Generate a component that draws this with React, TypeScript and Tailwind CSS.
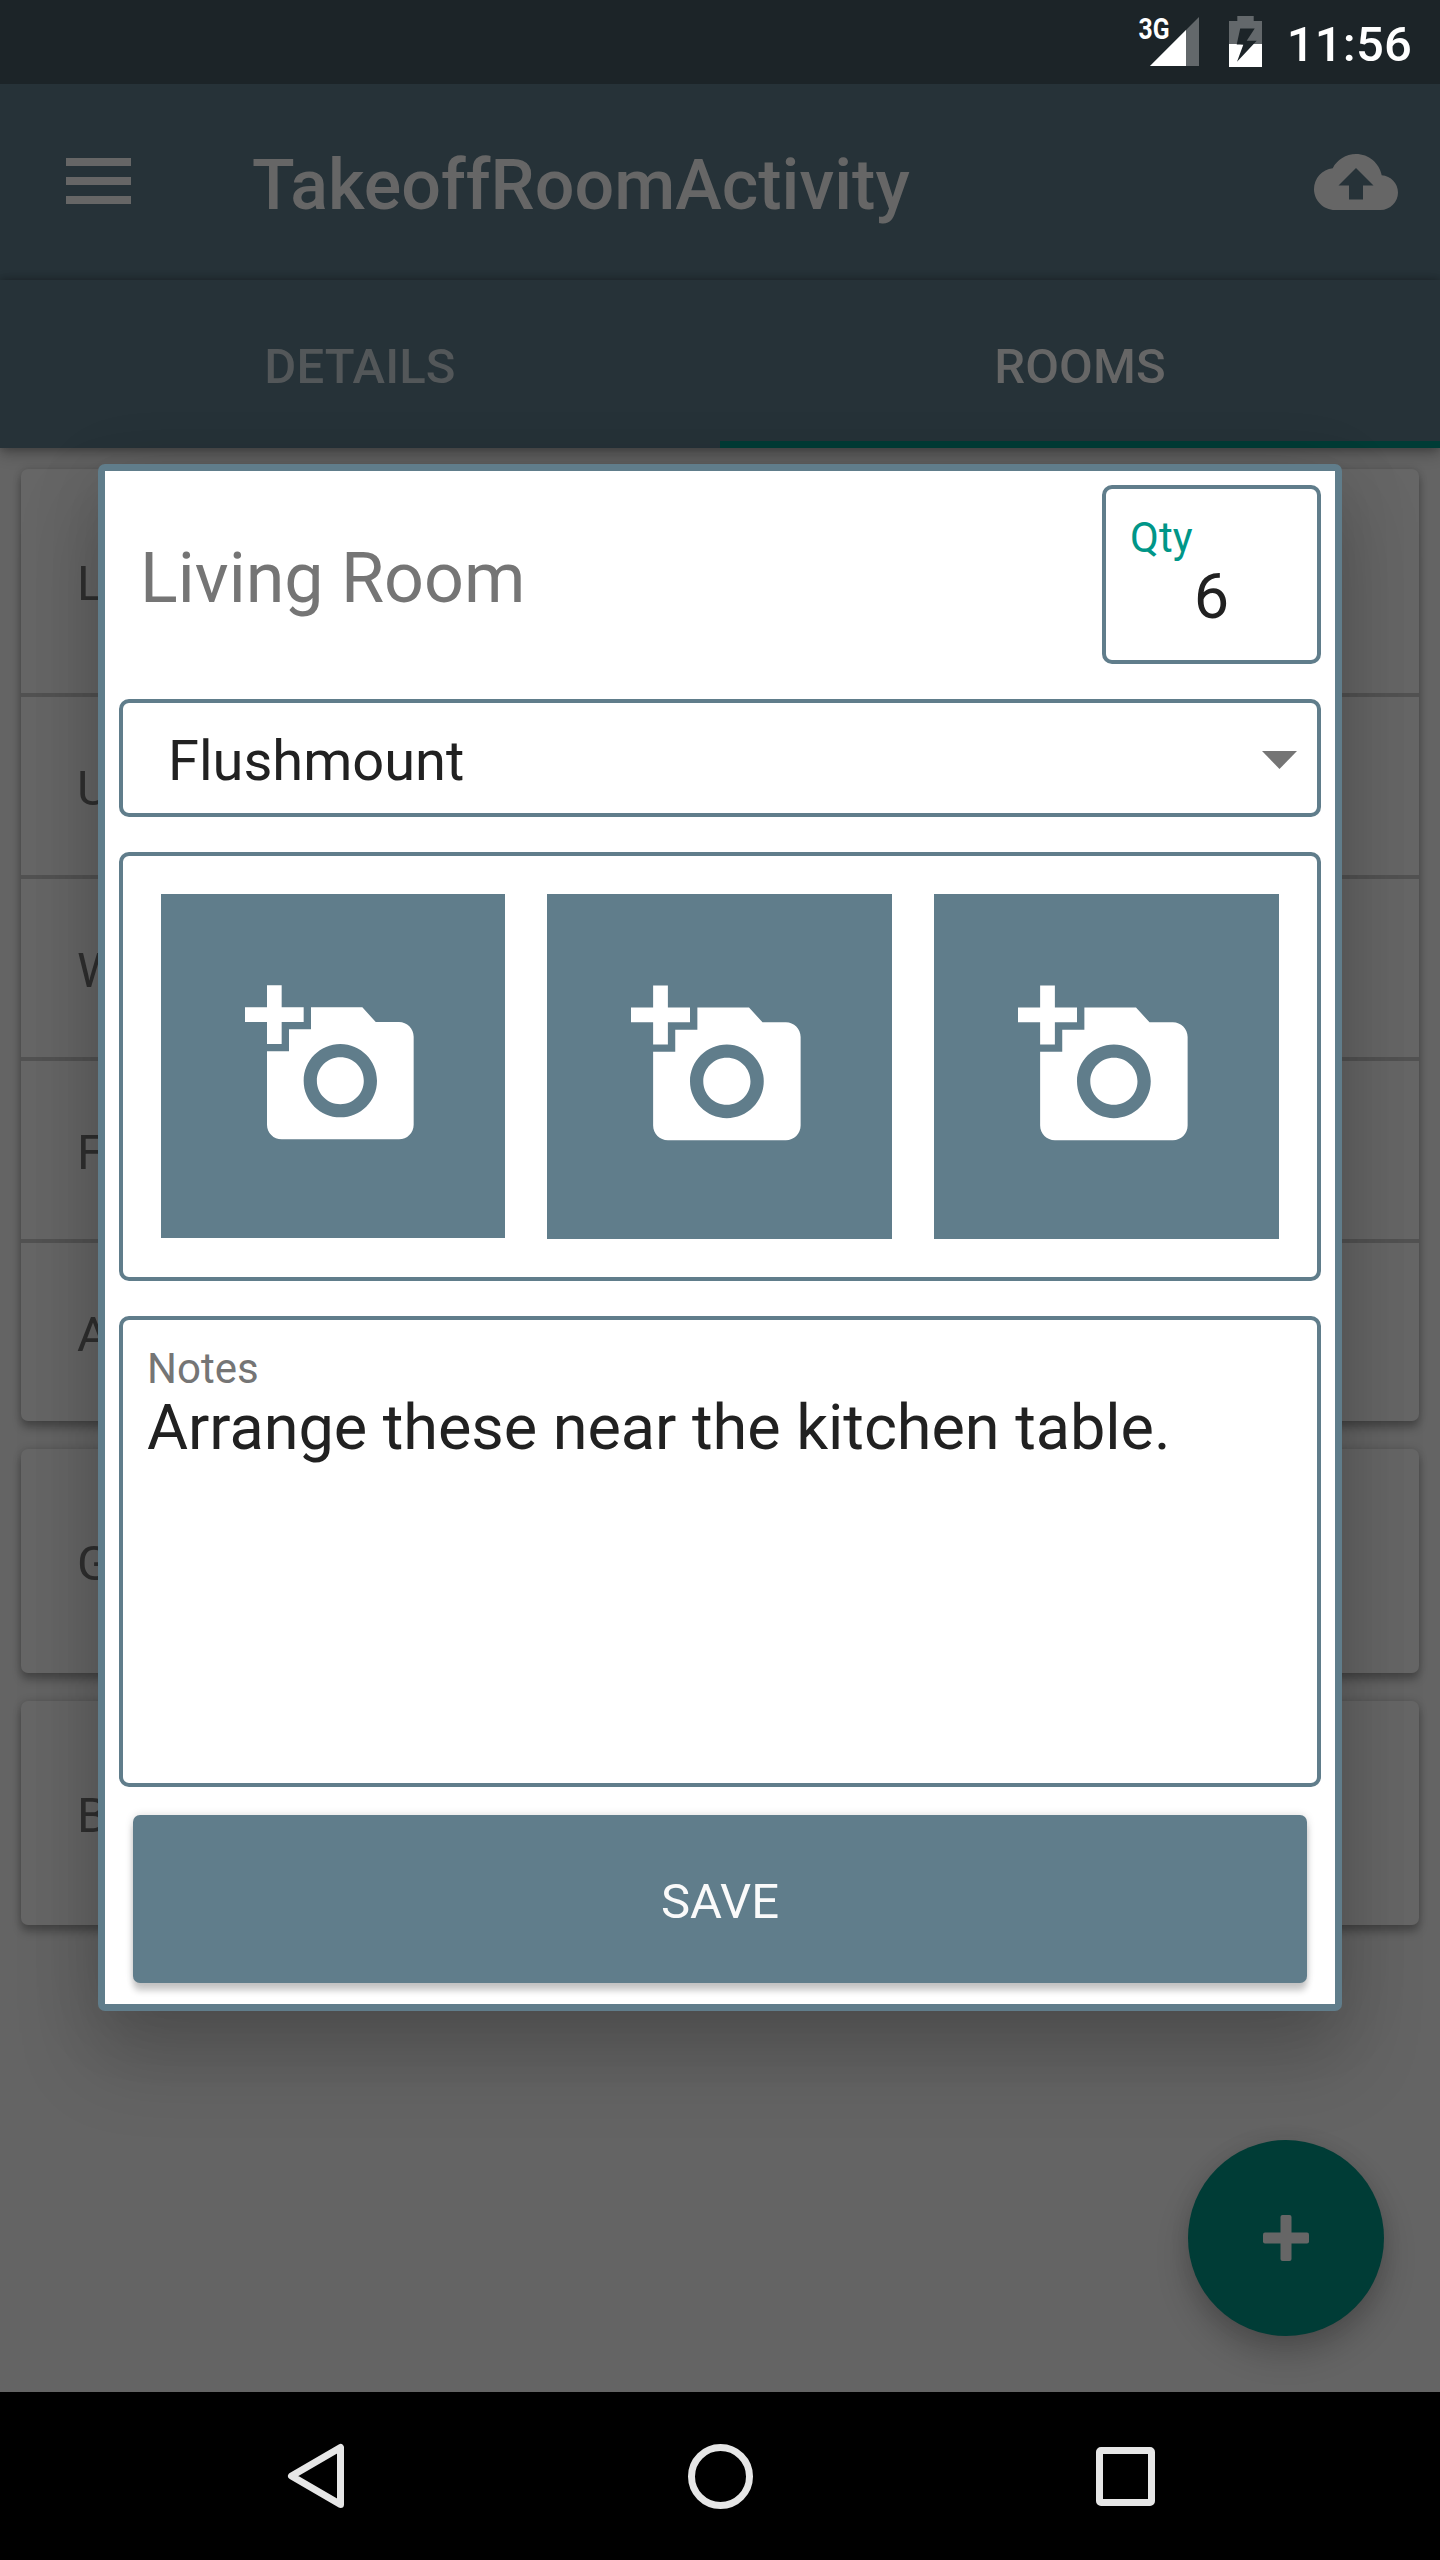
import React from "react";
import { MdAddAPhoto } from "react-icons/md";

function StatusBar() {
  return (
    <header className="flex h-[84px] items-start justify-end bg-[#1c2428] pr-[28px]">
      <svg className="h-[68px] w-[71px]" viewBox="1130 0 71 68">
        <path d="M1150 66L1199 17V66Z" fill="#63686b" />
        <path d="M1150 66L1186 30V66Z" fill="#fff" />
        <text
          x="1138.500"
          y="39"
          fill="#fff"
          fontFamily="Roboto, sans-serif"
          fontSize="30"
          fontWeight="700"
          textLength="31"
          lengthAdjust="spacingAndGlyphs"
        >
          3G
        </text>
      </svg>
      <svg className="mt-[16px] ml-[28px] h-[51px] w-[33px]" viewBox="1229 16 33 51">
        <path d="M1229 21h8.300v-5h16.400v5H1262V44h-33z" fill="#63686b" />
        <path d="M1229 44h33v23h-33z" fill="#fff" />
        <path d="M1240 44.500l-3.300 0 3.500-16h14.500l-8 12.300h10l-19.700 21 6.300-17z" fill="#1c2428" />
      </svg>
      <span className="mt-[20px] ml-[25px] text-[49px] leading-none font-medium tracking-[0.2px] whitespace-nowrap text-white">
        11:56
      </span>
    </header>
  );
}

function Toolbar() {
  return (
    <div className="flex h-[196px] items-center bg-[#263238] pr-[42px] pl-[65.500px]">
      <div className="flex w-[65px] flex-col gap-[11px] pb-[3px]">
        <div className="h-[8px] bg-[#666]" />
        <div className="h-[8px] bg-[#666]" />
        <div className="h-[8px] bg-[#666]" />
      </div>
      <h1 className="ml-[121.500px] flex-1 pt-[6px] text-[70px] leading-none font-medium tracking-[0.040px] text-[#666]">
        TakeoffRoomActivity
      </h1>
      <svg className="size-[84px]" viewBox="0 0 24 24" fill="#666">
        <path d="M19.350 10.040C18.670 6.590 15.640 4 12 4 9.110 4 6.600 5.640 5.350 8.040 2.340 8.360 0 10.910 0 14c0 3.310 2.690 6 6 6h13c2.760 0 5-2.240 5-5 0-2.640-2.050-4.780-4.650-4.960zM14 13v4h-4v-4H7l5-5 5 5h-3z" />
      </svg>
    </div>
  );
}

function Tabs() {
  return (
    <nav className="relative flex h-[168px] bg-[#263238] text-[49px] leading-none font-medium shadow-[0_7px_14px_rgba(0,0,0,0.2),0_0_9px_rgba(0,0,0,0.32)]">
      <div className="flex flex-1 items-center justify-center pt-[4px] tracking-[0.150px] text-[#535759]">DETAILS</div>
      <div className="flex flex-1 items-center justify-center border-b-[7px] border-[#003c36] pt-[11px] tracking-[0.150px] text-[#666]">
        ROOMS
      </div>
    </nav>
  );
}

function RoomCard({ items }: { items: string[] }) {
  return (
    <section className="overflow-hidden rounded-[7px] bg-[#666] shadow-[0_7px_8px_rgba(0,0,0,0.26),0_0_8px_rgba(0,0,0,0.16)]">
      {items.map((item, i) => (
        <div
          key={item}
          className={
            i === 0
              ? "flex h-[224px] items-center pt-[4px] pl-[56px]"
              : "flex h-[182px] items-center border-t-[4px] border-[#525252] pt-[4px] pl-[56px]"
          }
        >
          {item}
        </div>
      ))}
    </section>
  );
}

function Dialog() {
  return (
    <div
      role="dialog"
      className="absolute top-[464px] left-[98px] flex h-[1547px] w-[1244px] flex-col rounded-[7px] bg-[#607d8b] p-[7px] shadow-[0_46px_80px_4px_rgba(0,0,0,0.17),0_10px_70px_rgba(0,0,0,0.12)]"
    >
      <div className="flex flex-1 flex-col bg-white px-[14px] pt-[14px]">
        <div className="flex h-[179px] items-center justify-between">
          <h2 className="pt-[7px] pl-[21px] text-[70px] leading-none text-[#757575]">Living Room</h2>
          <div className="flex h-[179px] w-[219px] flex-col rounded-[10px] border-4 border-[#607d8b] pt-[28px]">
            <span className="pl-[24px] text-[42px] leading-none text-[#009688]">Qty</span>
            <span className="mt-[6px] text-center text-[63px] leading-none text-[#212121]">6</span>
          </div>
        </div>

        <div className="mt-[35px] flex h-[118px] items-center justify-between rounded-[10px] border-4 border-[#607d8b] pr-[20px] pl-[45px]">
          <span className="pt-[5px] text-[56px] leading-none text-[#212121]">Flushmount</span>
          <svg className="mt-[3px] h-[18px] w-[35px]" viewBox="0 0 35 18" fill="#757575">
            <path d="M0 0h35L17.500 18z" />
          </svg>
        </div>

        <div className="mt-[35px] flex h-[429px] justify-between rounded-[10px] border-4 border-[#607d8b] px-[38px] pt-[38px]">
          <div className="flex h-[344px] w-[344px] items-center justify-center bg-[#607d8b] text-white">
            <MdAddAPhoto className="size-[176px]" />
          </div>
          <div className="flex h-[345px] w-[345px] items-center justify-center bg-[#607d8b] text-white">
            <MdAddAPhoto className="size-[177px]" />
          </div>
          <div className="flex h-[345px] w-[345px] items-center justify-center bg-[#607d8b] text-white">
            <MdAddAPhoto className="size-[177px]" />
          </div>
        </div>

        <div className="mt-[35px] flex h-[471px] flex-col rounded-[10px] border-4 border-[#607d8b] pt-[28px] pl-[24px]">
          <span className="text-[42px] leading-none text-[#757575]">Notes</span>
          <p className="mt-[6px] text-[63px] leading-none tracking-[-0.040px] whitespace-nowrap text-[#212121]">
            Arrange these near the kitchen table.
          </p>
        </div>

        <button className="mx-[14px] mt-[28px] h-[168px] rounded-[7px] bg-[#607d8b] pt-[5px] text-[49px] leading-none text-[#fafafa] shadow-[0_8px_6px_rgba(0,0,0,0.19),0_0_8px_rgba(0,0,0,0.14)]">
          SAVE
        </button>
      </div>
    </div>
  );
}

function NavBar() {
  return (
    <footer className="relative flex h-[168px] items-center justify-between bg-black pr-[285px] pl-[287px]">
      <svg className="h-[66px] w-[58px]" viewBox="0 0 58 66" fill="none" stroke="#e6e6e6" strokeWidth="7" strokeLinejoin="round">
        <path d="M53.500 4.500V61.500L4.500 33z" />
      </svg>
      <div className="size-[65px] rounded-full border-[7px] border-[#e6e6e6]" />
      <div className="size-[59px] rounded-[5px] border-[7px] border-[#e6e6e6]" />
    </footer>
  );
}

export default function App() {
  return (
    <div className="relative flex h-[2560px] w-[1440px] flex-col overflow-hidden bg-[#646464] font-[Roboto,sans-serif]">
      <StatusBar />
      <Toolbar />
      <Tabs />
      <main className="flex flex-1 flex-col gap-[28px] px-[21px] pt-[21px] text-[49px] leading-none text-[#2f2f2f]">
        <RoomCard items={["L", "U", "W", "F", "A"]} />
        <RoomCard items={["G"]} />
        <RoomCard items={["B"]} />
      </main>
      <button className="absolute top-[2140px] left-[1188px] flex size-[196px] items-center justify-center rounded-full bg-[#003c36] shadow-[0_18px_32px_rgba(0,0,0,0.22),0_0_20px_rgba(0,0,0,0.08)]">
        <svg className="size-[46px]" viewBox="0 0 46 46" fill="#666">
          <rect x="0" y="17.500" width="46" height="11" rx="2" />
          <rect x="17.500" y="0" width="11" height="46" rx="2" />
        </svg>
      </button>
      <Dialog />
      <NavBar />
    </div>
  );
}
